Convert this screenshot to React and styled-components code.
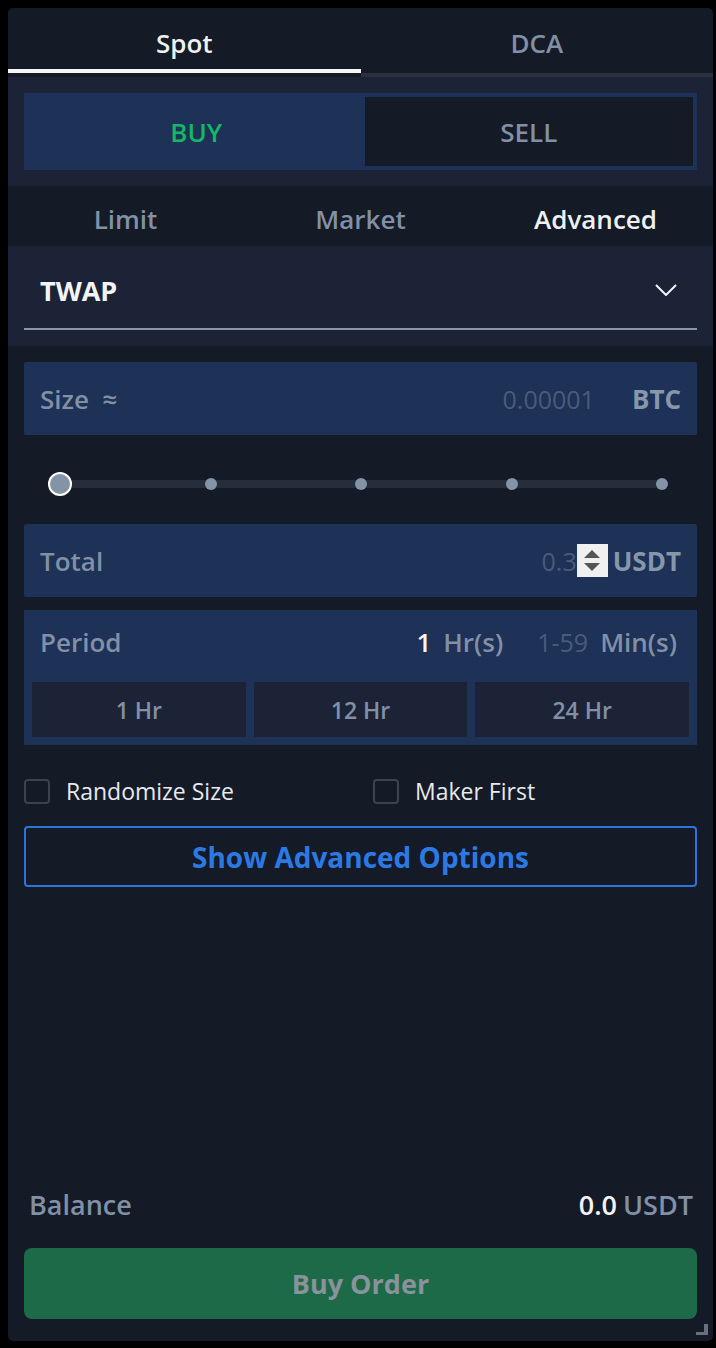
import styled, { createGlobalStyle } from "styled-components";

const GlobalStyle = createGlobalStyle`
  html, body {
    margin: 0;
    background: #000;
  }
  body {
    padding: 8px 0 0 8px;
    font-family: "Open Sans", "Noto Sans", sans-serif;
  }
  * {
    box-sizing: border-box;
  }
`;

const Panel = styled.div`
  width: 705px;
  height: 1333px;
  background: #141a26;
  border-radius: 5px;
  display: flex;
  flex-direction: column;
  position: relative;
  overflow: hidden;
`;

const Tabs = styled.div`
  display: flex;
  align-items: flex-start;
  height: 69px;
`;

const Tab = styled.div`
  flex: 1;
  display: flex;
  align-items: center;
  justify-content: center;
  font-size: 26px;
  font-weight: 600;
  color: ${({ $active }) => ($active ? "#eef0f3" : "#8190a5")};
  height: ${({ $active }) => ($active ? "65px" : "69px")};
  border-bottom: 4px solid ${({ $active }) => ($active ? "#f4f5f7" : "#2a303e")};
  padding-top: ${({ $active }) => ($active ? "8px" : "4px")};
`;

const Section = styled.div`
  background: #1c2337;
  padding: ${({ $pad = "16px" }) => $pad};
`;

const Toggle = styled.div`
  display: flex;
  height: 77px;
  padding: 4px;
  background: #1e3157;
`;

const Side = styled.div`
  flex: ${({ $buy }) => ($buy ? 337 : 329)};
  display: flex;
  align-items: center;
  justify-content: center;
  font-size: 26px;
  font-weight: 600;
  color: ${({ $buy }) => ($buy ? "#12b866" : "#8190a5")};
  background: ${({ $buy }) => ($buy ? "transparent" : "#141a26")};
`;

const TypeTabs = styled.div`
  display: flex;
  height: 60px;
  padding-top: 5px;
`;

const TypeTab = styled.div`
  flex: 1;
  display: flex;
  align-items: center;
  justify-content: center;
  font-size: 26px;
  font-weight: 600;
  color: ${({ $active }) => ($active ? "#eef0f3" : "#8190a5")};
`;

const Select = styled.div`
  height: 84px;
  display: flex;
  align-items: center;
  justify-content: space-between;
  padding: 6px 20px 0 16px;
  border-bottom: 2px solid #8795a8;
  font-size: 27px;
  font-weight: 700;
  color: #f2f4f6;
`;

const Body = styled.div`
  flex: 1;
  display: flex;
  flex-direction: column;
  padding: 16px 16px 22px;
`;

const Field = styled.div`
  height: 73px;
  background: #1e3157;
  border-radius: 2px;
  display: flex;
  align-items: center;
  padding: 0 16px;
  font-size: 26px;
  font-weight: 600;
  color: #8190a5;
`;

const Label = styled.span`
  flex: 1;
`;

const Placeholder = styled.span`
  font-size: 25px;
  font-weight: 400;
  color: #4a5b79;
  margin-right: ${({ $gap = "0" }) => $gap};
`;

const Unit = styled.span`
  font-weight: 700;
  color: #8797ab;
`;

const Spinner = styled.span`
  width: 31px;
  height: 33px;
  background: #f0f0f0;
  display: flex;
  flex-direction: column;
  align-items: center;
  justify-content: center;
  gap: 5px;
  margin: 0 5px 0 0;
`;

const Tri = styled.span`
  width: 0;
  height: 0;
  border-left: 8px solid transparent;
  border-right: 8px solid transparent;
  ${({ $up }) =>
    $up ? "border-bottom: 8px solid #555;" : "border-top: 8px solid #555;"}
`;

const SliderWrap = styled.div`
  height: 89px;
  display: flex;
  align-items: center;
  padding: 9px 35px 0 36px;
`;

const Track = styled.div`
  flex: 1;
  height: 8px;
  background: #272e3b;
  display: flex;
  align-items: center;
  justify-content: space-between;
`;

const Stop = styled.span`
  width: 0;
  display: flex;
  justify-content: center;
`;

const Dot = styled.span`
  flex: none;
  width: ${({ $thumb }) => ($thumb ? "24px" : "12px")};
  height: ${({ $thumb }) => ($thumb ? "24px" : "12px")};
  border-radius: 50%;
  background: #8494a7;
  border: ${({ $thumb }) => ($thumb ? "2px solid #fff" : "none")};
`;

const Period = styled.div`
  margin-top: 13px;
  background: #1e3157;
  padding: 0 8px 8px;
`;

const PeriodHead = styled.div`
  height: 64px;
  display: flex;
  align-items: center;
  padding: 0 12px 0 8px;
  margin-bottom: 8px;
  font-size: 26px;
  font-weight: 600;
  color: #8190a5;
`;

const Value = styled.span`
  color: ${({ $dim }) => ($dim ? "#4a5b79" : "#f2f4f6")};
  font-weight: ${({ $dim }) => ($dim ? 400 : 600)};
  font-size: ${({ $dim }) => ($dim ? "25px" : "26px")};
  margin-right: 12px;
`;

const Spacer = styled.span`
  width: 34px;
`;

const Presets = styled.div`
  display: grid;
  grid-template-columns: repeat(3, 1fr);
  gap: 8px;
`;

const Preset = styled.div`
  height: 55px;
  background: #1c2337;
  display: flex;
  align-items: center;
  justify-content: center;
  font-size: 23px;
  font-weight: 600;
  color: #8190a5;
`;

const Checks = styled.div`
  display: grid;
  grid-template-columns: 349px 1fr;
  margin-top: 30px;
`;

const Check = styled.label`
  display: flex;
  align-items: center;
  gap: 16px;
  font-size: 23px;
  color: #e6e9ee;
`;

const Box = styled.span`
  width: 26px;
  height: 25px;
  border: 2px solid #3b4250;
  border-radius: 4px;
`;

const OutlineButton = styled.div`
  margin-top: 19px;
  height: 61px;
  border: 2px solid #2b74dc;
  border-radius: 4px;
  display: flex;
  align-items: center;
  justify-content: center;
  font-size: 28px;
  font-weight: 700;
  color: #2c79e4;
`;

const Balance = styled.div`
  margin-top: auto;
  display: flex;
  justify-content: space-between;
  align-items: center;
  padding: 0 4px 0 5px;
  font-size: 27px;
  font-weight: 600;
  color: #8190a5;
`;

const Strong = styled.span`
  color: #f2f4f6;
  margin-right: 6px;
`;

const OrderButton = styled.div`
  margin-top: 25px;
  height: 71px;
  background: #1c6a47;
  border-radius: 8px;
  display: flex;
  align-items: center;
  justify-content: center;
  font-size: 27px;
  font-weight: 700;
  color: #8a929b;
`;

const Corner = styled.span`
  position: absolute;
  right: 5px;
  bottom: 6px;
  width: 12px;
  height: 11px;
  border-right: 4px solid #6b6f7b;
  border-bottom: 3px solid #6b6f7b;
`;

const Chevron = () => (
  <svg width="22" height="12" viewBox="0 0 22 12" fill="none">
    <path d="M1 1l10 10L21 1" stroke="#f2f4f6" strokeWidth="2" />
  </svg>
);

const steps = [true, false, false, false, false];

export default function App() {
  return (
    <>
      <GlobalStyle />
      <Panel>
        <Tabs>
          <Tab $active>Spot</Tab>
          <Tab>DCA</Tab>
        </Tabs>

        <Section>
          <Toggle>
            <Side $buy>BUY</Side>
            <Side>SELL</Side>
          </Toggle>
        </Section>

        <TypeTabs>
          <TypeTab>Limit</TypeTab>
          <TypeTab>Market</TypeTab>
          <TypeTab $active>Advanced</TypeTab>
        </TypeTabs>

        <Section $pad="0 16px 16px">
          <Select>
            TWAP
            <Chevron />
          </Select>
        </Section>

        <Body>
          <Field>
            <Label>Size&nbsp; ≈</Label>
            <Placeholder $gap="37px">0.00001</Placeholder>
            <Unit>BTC</Unit>
          </Field>

          <SliderWrap>
            <Track>
              {steps.map((thumb, i) => (
                <Stop key={i}>
                  <Dot $thumb={thumb} />
                </Stop>
              ))}
            </Track>
          </SliderWrap>

          <Field>
            <Label>Total</Label>
            <Placeholder>0.3</Placeholder>
            <Spinner>
              <Tri $up />
              <Tri />
            </Spinner>
            <Unit>USDT</Unit>
          </Field>

          <Period>
            <PeriodHead>
              <Label>Period</Label>
              <Value>1</Value>
              <span>Hr(s)</span>
              <Spacer />
              <Value $dim>1-59</Value>
              <span>Min(s)</span>
            </PeriodHead>
            <Presets>
              <Preset>1 Hr</Preset>
              <Preset>12 Hr</Preset>
              <Preset>24 Hr</Preset>
            </Presets>
          </Period>

          <Checks>
            <Check>
              <Box />
              Randomize Size
            </Check>
            <Check>
              <Box />
              Maker First
            </Check>
          </Checks>

          <OutlineButton>Show Advanced Options</OutlineButton>

          <Balance>
            <span>Balance</span>
            <span>
              <Strong>0.0</Strong>USDT
            </span>
          </Balance>

          <OrderButton>Buy Order</OrderButton>
        </Body>

        <Corner />
      </Panel>
    </>
  );
}
